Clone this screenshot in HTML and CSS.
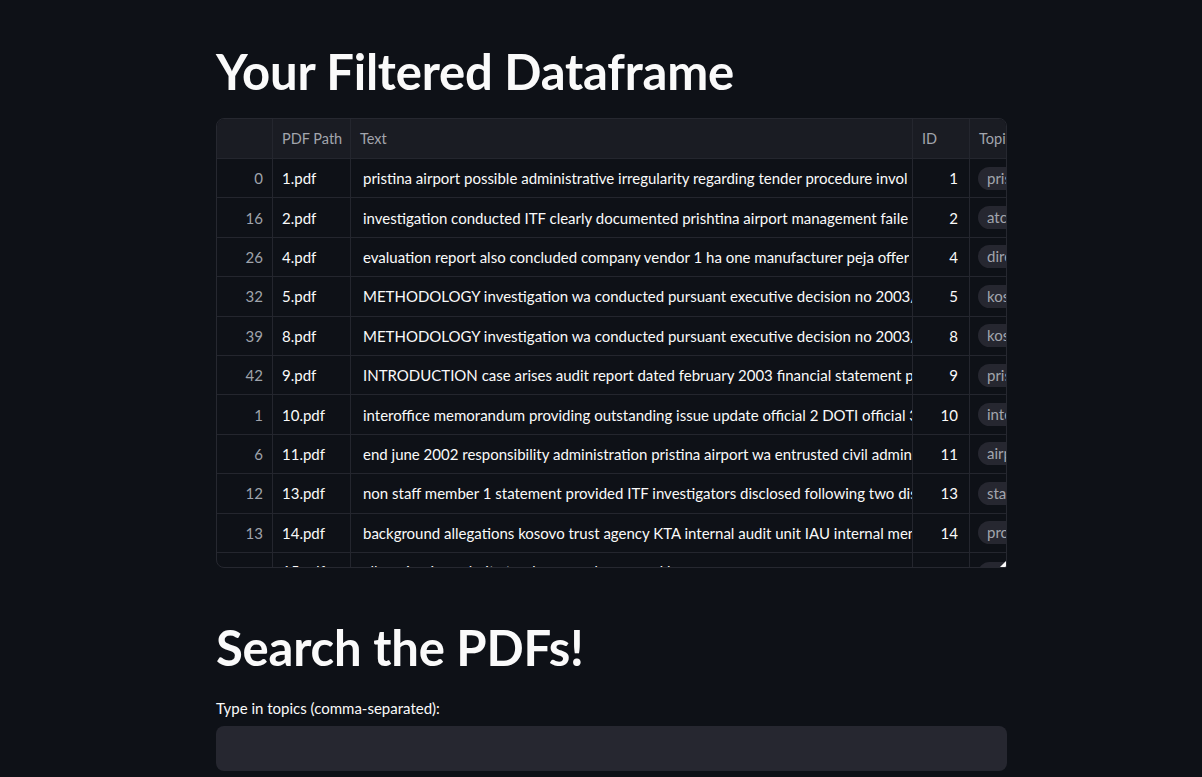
FILE: index.html
```html
<!DOCTYPE html>
<html>
<head>
<meta charset="utf-8">
<link rel="stylesheet" href="styles.css">
</head>
<body>
<main class="main">
  <h1 class="title first">Your Filtered Dataframe</h1>
  <div class="grid-wrap">
    <div class="grid">
      <div class="row head">
        <div class="c idx"></div>
        <div class="c path">PDF Path</div>
        <div class="c text">Text</div>
        <div class="c id">ID</div>
        <div class="c topic">Topi</div>
      </div>
      <div class="row"><div class="c idx">0</div><div class="c path">1.pdf</div><div class="c text"><span>pristina airport possible administrative irregularity regarding tender procedure invol</span></div><div class="c id">1</div><div class="c topic"><span class="pill">pris</span></div></div>
      <div class="row"><div class="c idx">16</div><div class="c path">2.pdf</div><div class="c text"><span>investigation conducted ITF clearly documented prishtina airport management faile</span></div><div class="c id">2</div><div class="c topic"><span class="pill">atc</span></div></div>
      <div class="row"><div class="c idx">26</div><div class="c path">4.pdf</div><div class="c text"><span>evaluation report also concluded company vendor 1 ha one manufacturer peja offer</span></div><div class="c id">4</div><div class="c topic"><span class="pill">dire</span></div></div>
      <div class="row"><div class="c idx">32</div><div class="c path">5.pdf</div><div class="c text"><span>METHODOLOGY investigation wa conducted pursuant executive decision no 2003/16</span></div><div class="c id">5</div><div class="c topic"><span class="pill">kos</span></div></div>
      <div class="row"><div class="c idx">39</div><div class="c path">8.pdf</div><div class="c text"><span>METHODOLOGY investigation wa conducted pursuant executive decision no 2003/16</span></div><div class="c id">8</div><div class="c topic"><span class="pill">kos</span></div></div>
      <div class="row"><div class="c idx">42</div><div class="c path">9.pdf</div><div class="c text"><span>INTRODUCTION case arises audit report dated february 2003 financial statement pris</span></div><div class="c id">9</div><div class="c topic"><span class="pill">pris</span></div></div>
      <div class="row"><div class="c idx">1</div><div class="c path">10.pdf</div><div class="c text"><span>interoffice memorandum providing outstanding issue update official 2 DOTI official 3</span></div><div class="c id">10</div><div class="c topic"><span class="pill">inte</span></div></div>
      <div class="row"><div class="c idx">6</div><div class="c path">11.pdf</div><div class="c text"><span>end june 2002 responsibility administration pristina airport wa entrusted civil admin</span></div><div class="c id">11</div><div class="c topic"><span class="pill">airp</span></div></div>
      <div class="row"><div class="c idx">12</div><div class="c path">13.pdf</div><div class="c text"><span>non staff member 1 statement provided ITF investigators disclosed following two dis</span></div><div class="c id">13</div><div class="c topic"><span class="pill">sta</span></div></div>
      <div class="row"><div class="c idx">13</div><div class="c path">14.pdf</div><div class="c text"><span>background allegations kosovo trust agency KTA internal audit unit IAU internal men</span></div><div class="c id">14</div><div class="c topic"><span class="pill">pro</span></div></div>
      <div class="row last"><div class="c idx"></div><div class="c path">15.pdf</div><div class="c text"><span>allegation irregularity tender procedure award kosovo energy</span></div><div class="c id"></div><div class="c topic"><span class="pill">ene</span></div></div>
    </div>
    <span class="resize"></span>
  </div>

  <h1 class="title second">Search the PDFs!</h1>
  <label class="label" for="topics">Type in topics (comma-separated):</label>
  <div class="input"><input id="topics" type="text"></div>
</main>
</body>
</html>
```
FILE: styles.css
```css
* { box-sizing: border-box; }
html, body { margin: 0; padding: 0; }
body {
  background: #0e1117;
  color: #fafafa;
  font-family: Lato, "Noto Sans", sans-serif;
  height: 777px;
  overflow: hidden;
}
.main {
  width: 791px;
  margin-left: 216px;
  padding-top: 40px;
}
.title {
  margin: 0;
  font-weight: 700;
  font-size: 49px;
  line-height: 62px;
  letter-spacing: -0.2px;
  color: #fafafa;
}
.first { height: 62px; }
.grid-wrap {
  position: relative;
  margin-top: 16px;
  height: 450px;
  border: 1px solid #262830;
  border-radius: 8px 8px 2px 8px;
  overflow: hidden;
}
.grid { width: 100%; }
.row {
  display: grid;
  grid-template-columns: 56px 78px 562px 57px 60px;
  height: 39.4px;
  border-bottom: 1px solid #24262e;
}
.row.head {
  height: 40px;
  background: #1a1c23;
}
.row.last .c { align-items: flex-start; padding-top: 9px; }
.c {
  display: flex;
  align-items: center;
  border-right: 1px solid #24262e;
  font-size: 15px;
  white-space: nowrap;
  overflow: hidden;
  color: #fafafa;
}
.text span { display: block; overflow: hidden; min-width: 0; }
.head .c { color: #a2a5ad; padding-left: 9px; font-size: 14.5px; }
.idx { justify-content: flex-end; padding-right: 9px; color: #9fa3ab; }
.head .idx { padding: 0; }
.path { padding-left: 9px; }
.text { padding-left: 12px; }
.id { justify-content: flex-end; padding-right: 11px; }
.head .id { justify-content: flex-start; padding-right: 0; }
.topic { padding-left: 8px; border-right: none; }
.pill {
  display: inline-block;
  background: #262730;
  color: #a2a5ad;
  border-radius: 12px 0 0 12px;
  padding: 2px 9px;
  min-width: 40px;
  line-height: 19px;
}
.resize {
  position: absolute;
  right: 0;
  bottom: 0;
  width: 0;
  height: 0;
  border-left: 6px solid transparent;
  border-bottom: 6px solid #fafafa;
}
.second { margin-top: 48px; }
.label {
  display: block;
  margin-top: 20px;
  font-size: 15px;
  line-height: 20px;
  color: #fafafa;
}
.input {
  margin-top: 8px;
  height: 45px;
  background: #262730;
  border-radius: 8px;
}
.input input {
  width: 100%;
  height: 100%;
  background: transparent;
  border: none;
  outline: none;
  color: #fafafa;
  font: inherit;
  padding: 0 12px;
}
```
